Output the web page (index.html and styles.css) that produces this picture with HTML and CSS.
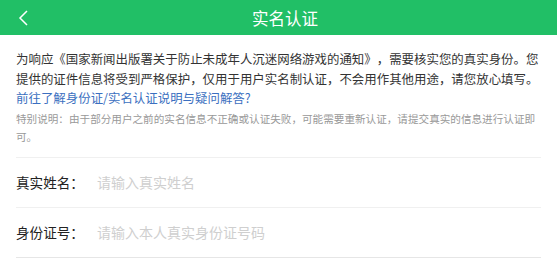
FILE: index.html
```html
<!DOCTYPE html>
<html lang="zh-CN">
<head>
    <meta charset="UTF-8">
    <meta name="viewport" content="width=device-width, initial-scale=1.0">
    <title>实名认证</title>
    <link rel="stylesheet" href="styles.css">
</head>
<body>
    <div class="header">
        <a class="back" href="#">
            <svg width="12" height="18" viewBox="0 0 12 18">
                <polyline points="9,2 2,9 9,16" fill="none" stroke="#fff" stroke-width="1.5"/>
            </svg>
        </a>
        <div class="title">实名认证</div>
        <div class="spacer"></div>
    </div>

    <div class="intro">
        <p class="notice">为响应《国家新闻出版署关于防止未成年人沉迷网络游戏的通知》，需要核实您的真实身份。您提供的证件信息将受到严格保护，仅用于用户实名制认证，不会用作其他用途，请您放心填写。</p>
        <a class="help" href="#">前往了解身份证/实名认证说明与疑问解答?</a>
        <p class="special">特别说明：由于部分用户之前的实名信息不正确或认证失败，可能需要重新认证，请提交真实的信息进行认证即<br>可。</p>
    </div>

    <form class="form">
        <div class="row">
            <label for="realName">真实姓名：</label>
            <input type="text" id="realName" placeholder="请输入真实姓名">
        </div>
        <div class="row last">
            <label for="idNumber">身份证号：</label>
            <input type="text" id="idNumber" placeholder="请输入本人真实身份证号码">
        </div>
    </form>
</body>
</html>
```

FILE: styles.css
```css
body {
    margin: 0;
    background: #fff;
    font-family: "Noto Sans CJK SC", "Noto Sans", sans-serif;
    color: #333;
    text-spacing-trim: space-all;
}
.header {
    display: flex;
    align-items: center;
    height: 35px;
    background: #21bf66;
    color: #fff;
}
.back {
    display: flex;
    align-items: center;
    width: 45px;
    padding-left: 18px;
    box-sizing: border-box;
}
.title {
    flex: 1;
    text-align: center;
    font-size: 16.5px;
}
.spacer {
    width: 32px;
}
.intro {
    margin: 0 16px;
    padding: 15px 0 11px;
    border-bottom: 1px solid #f0f0f0;
}
.notice {
    margin: 0;
    font-size: 12.45px;
    line-height: 19.5px;
    color: #333;
}
.help {
    display: block;
    font-size: 12.45px;
    line-height: 19.5px;
    color: #3b6fc0;
    text-decoration: none;
}
.special {
    margin: 1px 0 0;
    font-size: 10.6px;
    line-height: 18px;
    color: #999;
}
/* form rows */
.form {
    margin: 0 16px;
}
.row {
    display: flex;
    align-items: center;
    height: 49px;
    border-bottom: 1px solid #f0f0f0;
}
.row.last {
    border-bottom-color: #e6e6e6;
}
.row label {
    width: 81px;
    font-size: 13.6px;
    color: #222;
}
.row input {
    flex: 1;
    border: none;
    outline: none;
    padding: 0;
    font-family: inherit;
    font-size: 14px;
    background: transparent;
}
.row input::placeholder {
    color: #cfcfcf;
}
```
